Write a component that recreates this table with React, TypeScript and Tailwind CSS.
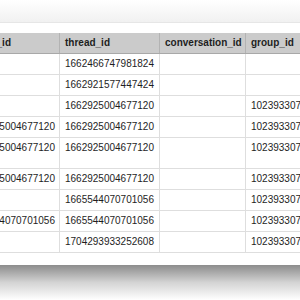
const columns = ['parent_id', 'thread_id', 'conversation_id', 'group_id'];

const rows: { cells: string[]; tall?: boolean }[] = [
  { cells: ['', '1662466747981824', '', ''] },
  { cells: ['', '1662921577447424', '', ''] },
  { cells: ['', '1662925004677120', '', '1023933070'] },
  { cells: ['1662925004677120', '1662925004677120', '', '1023933070'] },
  { cells: ['1662925004677120', '1662925004677120', '', '1023933070'], tall: true },
  { cells: ['1662925004677120', '1662925004677120', '', '1023933070'] },
  { cells: ['', '1665544070701056', '', '1023933070'] },
  { cells: ['1665544070701056', '1665544070701056', '', '1023933070'] },
  { cells: ['', '1704293933252608', '', '1023933070'] },
];

export default function App() {
  return (
    <div
      className="w-[300px] h-[300px] overflow-hidden bg-white flex flex-col"
      style={{ fontFamily: '"Liberation Sans", Arial, sans-serif' }}
    >
      <div className="h-[23px] bg-gradient-to-b from-white to-[#f1f1f1] border-b border-[#e6e6e6]" />
      <div className="h-[10px]" />
      <div className="ml-[-39px] w-[420px] flex flex-col text-[10px] text-[#1e1e1e]">
        <div className="grid grid-cols-[99px_100px_86px_135px] h-[21px] bg-[#cbcbcb] border-b border-[#a8a8a8]">
          {columns.map((c) => (
            <div key={c} className="pl-[5px] pt-[4px] font-bold border-r border-[#b3b3b3] leading-[12px]">
              {c}
            </div>
          ))}
        </div>
        {rows.map((r, i) => (
          <div
            key={i}
            className={
              'grid grid-cols-[99px_100px_86px_135px] border-b border-[#dedede] ' +
              (r.tall ? 'h-[31px]' : 'h-[21px]')
            }
          >
            {r.cells.map((v, j) => (
              <div key={j} className="pl-[5px] pt-[4px] border-r border-[#dedede] leading-[12px]">
                {v}
              </div>
            ))}
          </div>
        ))}
      </div>
      <div className="h-[12px]" />
      <div className="flex-1 bg-gradient-to-b from-[#8c8c8c] via-[#d4d4d4] to-white" />
    </div>
  );
}
